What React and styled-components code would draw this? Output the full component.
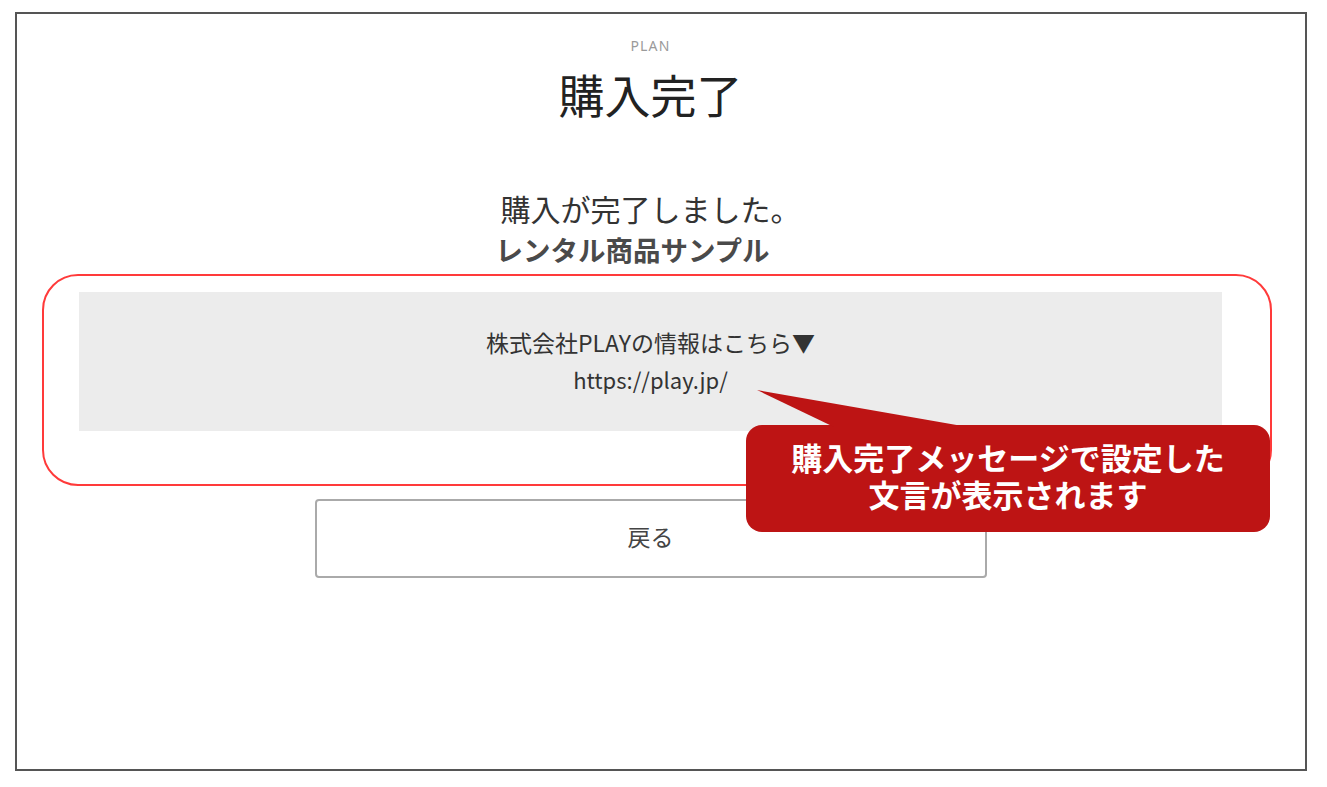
import React from "react";
import styled, { createGlobalStyle } from "styled-components";

const GlobalStyle = createGlobalStyle`
  html, body {
    margin: 0;
    padding: 0;
    background: #ffffff;
  }
  body {
    font-family: "Noto Sans CJK JP", "Noto Sans", sans-serif;
  }
`;

const Frame = styled.div`
  box-sizing: border-box;
  margin: 12px 0 0 15px;
  width: 1292px;
  height: 759px;
  border: 2px solid #555;
  padding: 23px 83px 0 62px;
  display: flex;
  flex-direction: column;
  align-items: center;
`;

const Eyebrow = styled.div`
  font-family: "Noto Sans", sans-serif;
  font-size: 14px;
  line-height: 18px;
  letter-spacing: 1.2px;
  color: #9a9a9a;
`;

const Title = styled.h1`
  margin: 10px 0 0;
  font-size: 46px;
  line-height: 56px;
  font-weight: 400;
  color: #222;
`;

const Message = styled.p`
  margin: 68px 0 0;
  font-size: 30px;
  line-height: 38px;
  color: #333;
`;

const ProductName = styled.p`
  margin: 5px 0 0;
  padding-right: 36px;
  font-size: 27.5px;
  line-height: 34px;
  font-weight: 700;
  color: #4a4a4a;
`;

const Highlight = styled.div`
  position: relative;
  align-self: stretch;
  margin: 8px -50px 0 -37px;
  padding: 16px 48px 53px 35px;
  border: 2px solid #ff3a3a;
  border-radius: 36px;
`;

const InfoBox = styled.div`
  background: #ececec;
  padding: 32px 0 33px;
  text-align: center;
  line-height: 37px;
  color: #333;
`;

const InfoLine = styled.div`
  font-size: ${(p) => p.$size}px;
`;

const BackButton = styled.button`
  box-sizing: border-box;
  margin-top: 13px;
  width: 672px;
  height: 79px;
  padding: 0 0 5px;
  background: #fff;
  border: 2px solid #aaa;
  border-radius: 4px;
  font-family: "Noto Sans CJK JP", sans-serif;
  font-size: 23px;
  color: #444;
`;

const Callout = styled.div`
  position: absolute;
  left: 702px;
  top: 149px;
  width: 524px;
  height: 107px;
  box-sizing: border-box;
  padding-top: 13px;
  background: #bd1414;
  border-radius: 16px;
  color: #fff;
  font-size: 31px;
  line-height: 37px;
  font-weight: 700;
  text-align: center;
`;

const Tail = styled.svg`
  position: absolute;
  left: 0;
  top: -36px;
  overflow: visible;
`;

export default function App() {
  return (
    <>
      <GlobalStyle />
      <Frame>
        <Eyebrow>PLAN</Eyebrow>
        <Title>購入完了</Title>
        <Message>購入が完了しました。</Message>
        <ProductName>レンタル商品サンプル</ProductName>
        <Highlight>
          <InfoBox>
            <InfoLine $size={23}>株式会社PLAYの情報はこちら▼</InfoLine>
            <InfoLine $size={22}>https://play.jp/</InfoLine>
          </InfoBox>
          <Callout>
            <Tail width="230" height="40" viewBox="0 0 230 40">
              <polygon points="11,1 88,38 222,38" fill="#bd1414" />
            </Tail>
            購入完了メッセージで設定した
            <br />
            文言が表示されます
          </Callout>
        </Highlight>
        <BackButton>戻る</BackButton>
      </Frame>
    </>
  );
}
